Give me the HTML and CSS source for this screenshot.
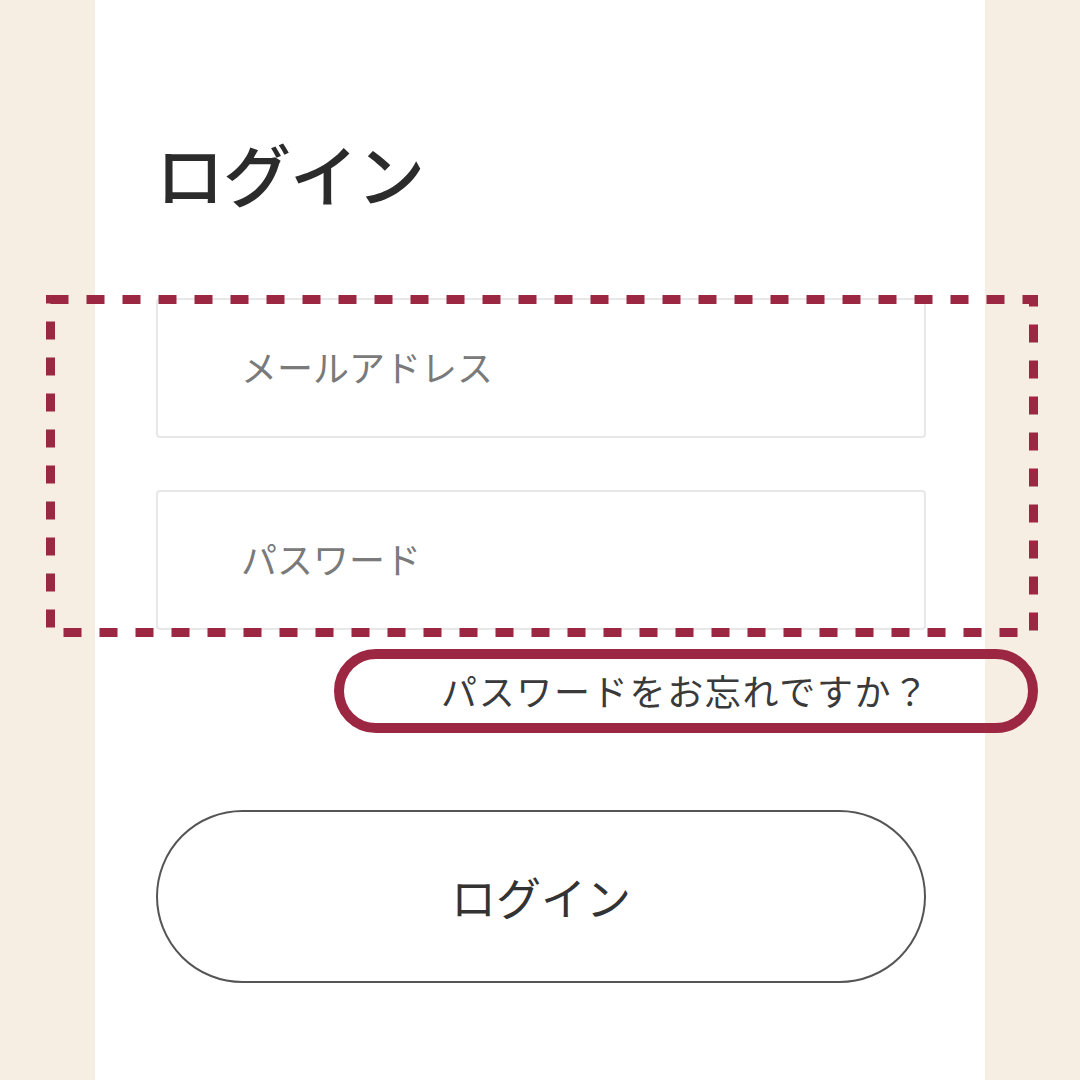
FILE: index.html
```html
<!DOCTYPE html>
<html lang="ja">
<head>
<meta charset="utf-8">
<title>ログイン</title>
<link rel="stylesheet" href="styles.css">
</head>
<body>
<main class="panel">
  <h1 class="title">ログイン</h1>
  <form class="form">
    <div class="fields">
      <input class="field" type="email" placeholder="メールアドレス">
      <input class="field" type="password" placeholder="パスワード">
    </div>
    <div class="forgot-row">
      <a class="forgot" href="#">パスワードをお忘れですか？</a>
    </div>
    <button class="submit" type="button">ログイン</button>
  </form>
</main>
<svg class="note note-fields" width="1080" height="1080" viewBox="0 0 1080 1080" aria-hidden="true">
  <rect x="50.5" y="299.5" width="983" height="333" fill="none" stroke="#9c2742" stroke-width="9" stroke-dasharray="18 18"/>
  <rect x="339" y="654" width="694" height="74" rx="37" ry="37" fill="none" stroke="#9c2742" stroke-width="10"/>
</svg>
</body>
</html>
```

FILE: styles.css
```css
* { box-sizing: border-box; }

html, body {
  margin: 0;
  padding: 0;
}

body {
  background: #f6eee2;
  font-family: "Noto Sans CJK JP", "Noto Sans", sans-serif;
  color: #333;
  width: 1080px;
  height: 1080px;
  overflow: hidden;
  position: relative;
}

.panel {
  width: 890px;
  height: 1080px;
  margin-left: 95px;
  background: #fff;
  padding: 133px 59px 0 61px;
}

.title {
  margin: 0;
  font-size: 68px;
  line-height: 80px;
  font-weight: 500;
  color: #2b2b2b;
  letter-spacing: -1px;
}

.form {
  margin-top: 85px;
  display: flex;
  flex-direction: column;
}

.fields {
  display: flex;
  flex-direction: column;
  gap: 52px;
}

.field {
  display: block;
  width: 770px;
  height: 140px;
  border: 2px solid #e8e8e8;
  border-radius: 4px;
  padding: 0 0 4px 83px;
  font-family: "Noto Sans CJK JP", "Noto Sans", sans-serif;
  font-size: 36px;
  color: #333;
  background: #fff;
  outline: none;
}

.field::placeholder {
  color: #7a7a7a;
  opacity: 1;
}

.forgot-row {
  display: flex;
  justify-content: flex-end;
  margin-right: -4px;
  margin-top: 38px;
}

.forgot {
  font-size: 36px;
  line-height: 44px;
  letter-spacing: 1.7px;
  color: #3a3a3a;
  text-decoration: none;
}

.submit {
  margin-top: 98px;
  width: 770px;
  height: 173px;
  border: 2px solid #555;
  border-radius: 87px;
  background: #fff;
  font-family: "Noto Sans CJK JP", "Noto Sans", sans-serif;
  font-size: 45px;
  color: #333;
  cursor: pointer;
}

.note {
  position: absolute;
  left: 0;
  top: 0;
  pointer-events: none;
}
```
